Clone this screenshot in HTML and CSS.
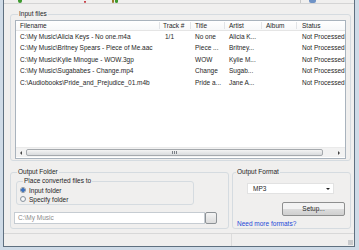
FILE: index.html
```html
<!DOCTYPE html>
<html>
<head>
<meta charset="utf-8">
<link rel="stylesheet" href="styles.css">
</head>
<body>
<div class="frame">
  <div class="win">
    <div class="toolbar">
      <span class="ti green t1"></span>
      <span class="ti red t2"></span>
      <span class="ti yellow t3"></span>
      <span class="ti green t4"></span>
      <span class="tsep"></span>
      <span class="ti blue t5"></span>
    </div>
    <div class="content">
      <fieldset class="group input-group">
        <legend>Input files</legend>
        <div class="list">
          <div class="row head">
            <div class="c c1">Filename</div>
            <div class="c c2">Track #</div>
            <div class="c c3">Title</div>
            <div class="c c4">Artist</div>
            <div class="c c5">Album</div>
            <div class="c c6">Status</div>
          </div>
          <div class="rows">
            <div class="row">
              <div class="c c1">C:\My Music\Alicia Keys - No one.m4a</div>
              <div class="c c2">1/1</div>
              <div class="c c3">No one</div>
              <div class="c c4">Alicia K...</div>
              <div class="c c5"></div>
              <div class="c c6">Not Processed</div>
            </div>
            <div class="row">
              <div class="c c1">C:\My Music\Britney Spears - Piece of Me.aac</div>
              <div class="c c2"></div>
              <div class="c c3">Piece ...</div>
              <div class="c c4">Britney...</div>
              <div class="c c5"></div>
              <div class="c c6">Not Processed</div>
            </div>
            <div class="row">
              <div class="c c1">C:\My Music\Kylie Minogue - WOW.3gp</div>
              <div class="c c2"></div>
              <div class="c c3">WOW</div>
              <div class="c c4">Kylie M...</div>
              <div class="c c5"></div>
              <div class="c c6">Not Processed</div>
            </div>
            <div class="row">
              <div class="c c1">C:\My Music\Sugababes - Change.mp4</div>
              <div class="c c2"></div>
              <div class="c c3">Change</div>
              <div class="c c4">Sugab...</div>
              <div class="c c5"></div>
              <div class="c c6">Not Processed</div>
            </div>
            <div class="row">
              <div class="c c1">C:\Audiobooks\Pride_and_Prejudice_01.m4b</div>
              <div class="c c2"></div>
              <div class="c c3">Pride a...</div>
              <div class="c c4">Jane A...</div>
              <div class="c c5"></div>
              <div class="c c6">Not Processed</div>
            </div>
          </div>
          <div class="hscroll">
            <span class="arrow left"></span>
            <div class="thumb"><span class="grip"></span></div>
            <span class="arrow right"></span>
          </div>
        </div>
      </fieldset>
      <div class="bottom">
        <fieldset class="group out-folder">
          <legend>Output Folder</legend>
          <fieldset class="group inner">
            <legend>Place converted files to</legend>
            <label class="radio first"><span class="dot on"></span>Input folder</label>
            <label class="radio"><span class="dot"></span>Specify folder</label>
          </fieldset>
          <div class="pathrow">
            <div class="path">C:\My Music</div>
            <div class="browse"></div>
          </div>
        </fieldset>
        <fieldset class="group out-format">
          <legend>Output Format</legend>
          <div class="select"><span>MP3</span><span class="caret"></span></div>
          <div class="btn">Setup...</div>
          <a class="link">Need more formats?</a>
        </fieldset>
      </div>
    </div>
    <div class="status">
      <div class="sp1"></div>
      <div class="sp2"><span class="sgrip"></span></div>
    </div>
  </div>
</div>
</body>
</html>
```
FILE: styles.css
```css
html, body {
  margin: 0;
  padding: 0;
}
body {
  width: 359px;
  height: 250px;
  overflow: hidden;
  font-family: "Liberation Sans", Arial, sans-serif;
  font-size: 6.5px;
  color: #1e1e1e;
}
.frame {
  width: 359px;
  height: 250px;
  box-sizing: border-box;
  background: #cfdbe7;
  padding: 0 4px 3px 3px;
}
.win {
  height: 100%;
  box-sizing: border-box;
  background: #f0efee;
  border: 1px solid #5f7080;
  border-top: none;
  display: flex;
  flex-direction: column;
}
.toolbar {
  height: 3px;
  flex: none;
  border-bottom: 1px solid #d4d4d4;
  display: flex;
  align-items: flex-end;
  overflow: hidden;
  background: #f0efee;
}
.ti {
  display: block;
  height: 3px;
  border-radius: 0 0 2px 2px;
}
.green { background: #3d9a2e; }
.red { background: #c8434a; }
.yellow { background: #9a7a2a; }
.blue { background: #6f93c6; }
.t1 { margin-left: 14px; width: 4px; }
.t2 { margin-left: 62px; width: 2px; height: 2px; }
.t3 { margin-left: 26px; width: 2px; }
.t4 { margin-left: 1px; width: 3px; }
.tsep { margin-left: 182px; width: 1px; height: 3px; background: #c8c8c8; }
.t5 { margin-left: 8px; width: 7px; }

.content {
  flex: none;
  padding: 6px 3px 0 6px;
  display: flex;
  flex-direction: column;
}
.group {
  margin: 0;
  border: 1px solid #d5dbe0;
  border-radius: 3px;
  padding: 0;
  min-width: 0;
}
.group > legend {
  padding: 0 1px;
  margin-left: 3px;
  line-height: 8px;
  color: #1e1e1e;
}
.input-group {
  padding: 2px 4px 3px 4px;
  height: 151px;
  box-sizing: border-box;
}
.list {
  height: 137px;
  background: #fff;
  border: 1px solid #a9b3bd;
  display: flex;
  flex-direction: column;
  overflow: hidden;
}
.row {
  display: grid;
  grid-template-columns: 144px 31px 34px 37px 35px 60px;
  height: 11.4px;
  line-height: 11.4px;
  white-space: nowrap;
}
.row.head {
  height: 9px;
  line-height: 9px;
  border-bottom: 1px solid #e5e5e5;
  background: linear-gradient(#fff, #f7f8f9);
}
.head .c {
  border-right: 1px solid #e2e4e7;
  height: 7px;
  margin-top: 1px;
  line-height: 7px;
}
.c {
  padding-left: 4px;
  overflow: hidden;
}
.c2 { padding-left: 3px; }
.rows .c2 { padding-left: 5px; }
.c6 { padding-left: 5px; }
.rows { flex: 1; }
.hscroll {
  height: 9px;
  display: flex;
  align-items: center;
  background: #f2f2f2;
  border-top: 1px solid #eaeaea;
  margin-bottom: 1px;
}
.arrow {
  width: 0;
  height: 0;
  border-top: 2px solid transparent;
  border-bottom: 2px solid transparent;
}
.arrow.left {
  margin-left: 4px;
  border-right: 2px solid #444;
}
.arrow.right {
  margin-left: 15px;
  border-left: 2px solid #444;
}
.thumb {
  margin-left: 4px;
  width: 297px;
  height: 7px;
  box-sizing: border-box;
  border: 1px solid #a5a9ad;
  border-radius: 2px;
  background: linear-gradient(#f4f4f4, #d9dbdd);
  display: flex;
  justify-content: center;
  align-items: center;
}
.grip {
  width: 5px;
  height: 3px;
  background: repeating-linear-gradient(90deg, #7c8187 0 1px, transparent 1px 2px);
}

.bottom {
  display: flex;
  gap: 3px;
  margin-top: 7px;
  height: 61px;
}
.out-folder {
  width: 219px;
  box-sizing: border-box;
  padding: 0 0 0 3px;
}
.inner {
  width: 178px;
  height: 28px;
  box-sizing: border-box;
  margin: 1px 0 0 2px;
  padding: 0 0 0 3px;
}
.radio {
  display: flex;
  align-items: center;
  height: 9px;
  line-height: 9px;
}
.radio.first { margin-top: 0.5px; }
.dot {
  width: 6px;
  height: 6px;
  box-sizing: border-box;
  border: 1px solid #8a949e;
  border-radius: 50%;
  background: radial-gradient(circle, #fff, #e4e8ec);
  margin-right: 3px;
}
.dot.on {
  background: radial-gradient(circle, #3a72c4 0 1.6px, #e4ecf4 2px);
}
.pathrow {
  display: flex;
  margin-top: 7px;
  height: 12px;
}
.path {
  width: 191px;
  box-sizing: border-box;
  border: 1px solid #c6ccd2;
  background: #fff;
  color: #8a8a8a;
  line-height: 10px;
  padding-left: 3px;
}
.browse {
  width: 12px;
  box-sizing: border-box;
  border: 1px solid #8d9296;
  border-radius: 2px;
  background: linear-gradient(#f4f4f4, #dcdcdc);
}
.out-format {
  flex: 1;
  box-sizing: border-box;
  padding: 0;
}
.select {
  margin: 7px 0 0 14px;
  width: 87px;
  height: 11px;
  box-sizing: border-box;
  border: 1px solid #e2e2e2;
  background: #fff;
  display: flex;
  align-items: center;
  justify-content: space-between;
  padding: 0 3px 0 5px;
}
.caret {
  width: 0;
  height: 0;
  border-left: 2px solid transparent;
  border-right: 2px solid transparent;
  border-top: 2px solid #222;
}
.btn {
  margin: 8px 0 0 49px;
  width: 63px;
  height: 14px;
  box-sizing: border-box;
  border: 1px solid #8e8f8f;
  border-radius: 2px;
  background: linear-gradient(#f3f3f3 50%, #dddddd 50%, #cfcfcf);
  text-align: center;
  line-height: 12px;
}
.link {
  display: block;
  color: #2447d8;
  margin: 4px 0 0 4px;
  line-height: 8px;
}
.status {
  flex: none;
  height: 12px;
  border-top: 1px solid #d8d8d8;
  display: flex;
  margin-top: 4px;
}
.sp1 {
  width: 227px;
  border-right: 1px solid #dcdcdc;
}
.sp2 {
  flex: 1;
  position: relative;
}
.sgrip {
  position: absolute;
  right: 1px;
  bottom: 1px;
  width: 5px;
  height: 5px;
  background: radial-gradient(circle, #9aa0a6 0.6px, transparent 0.8px) 0 0 / 2px 2px;
}
```
